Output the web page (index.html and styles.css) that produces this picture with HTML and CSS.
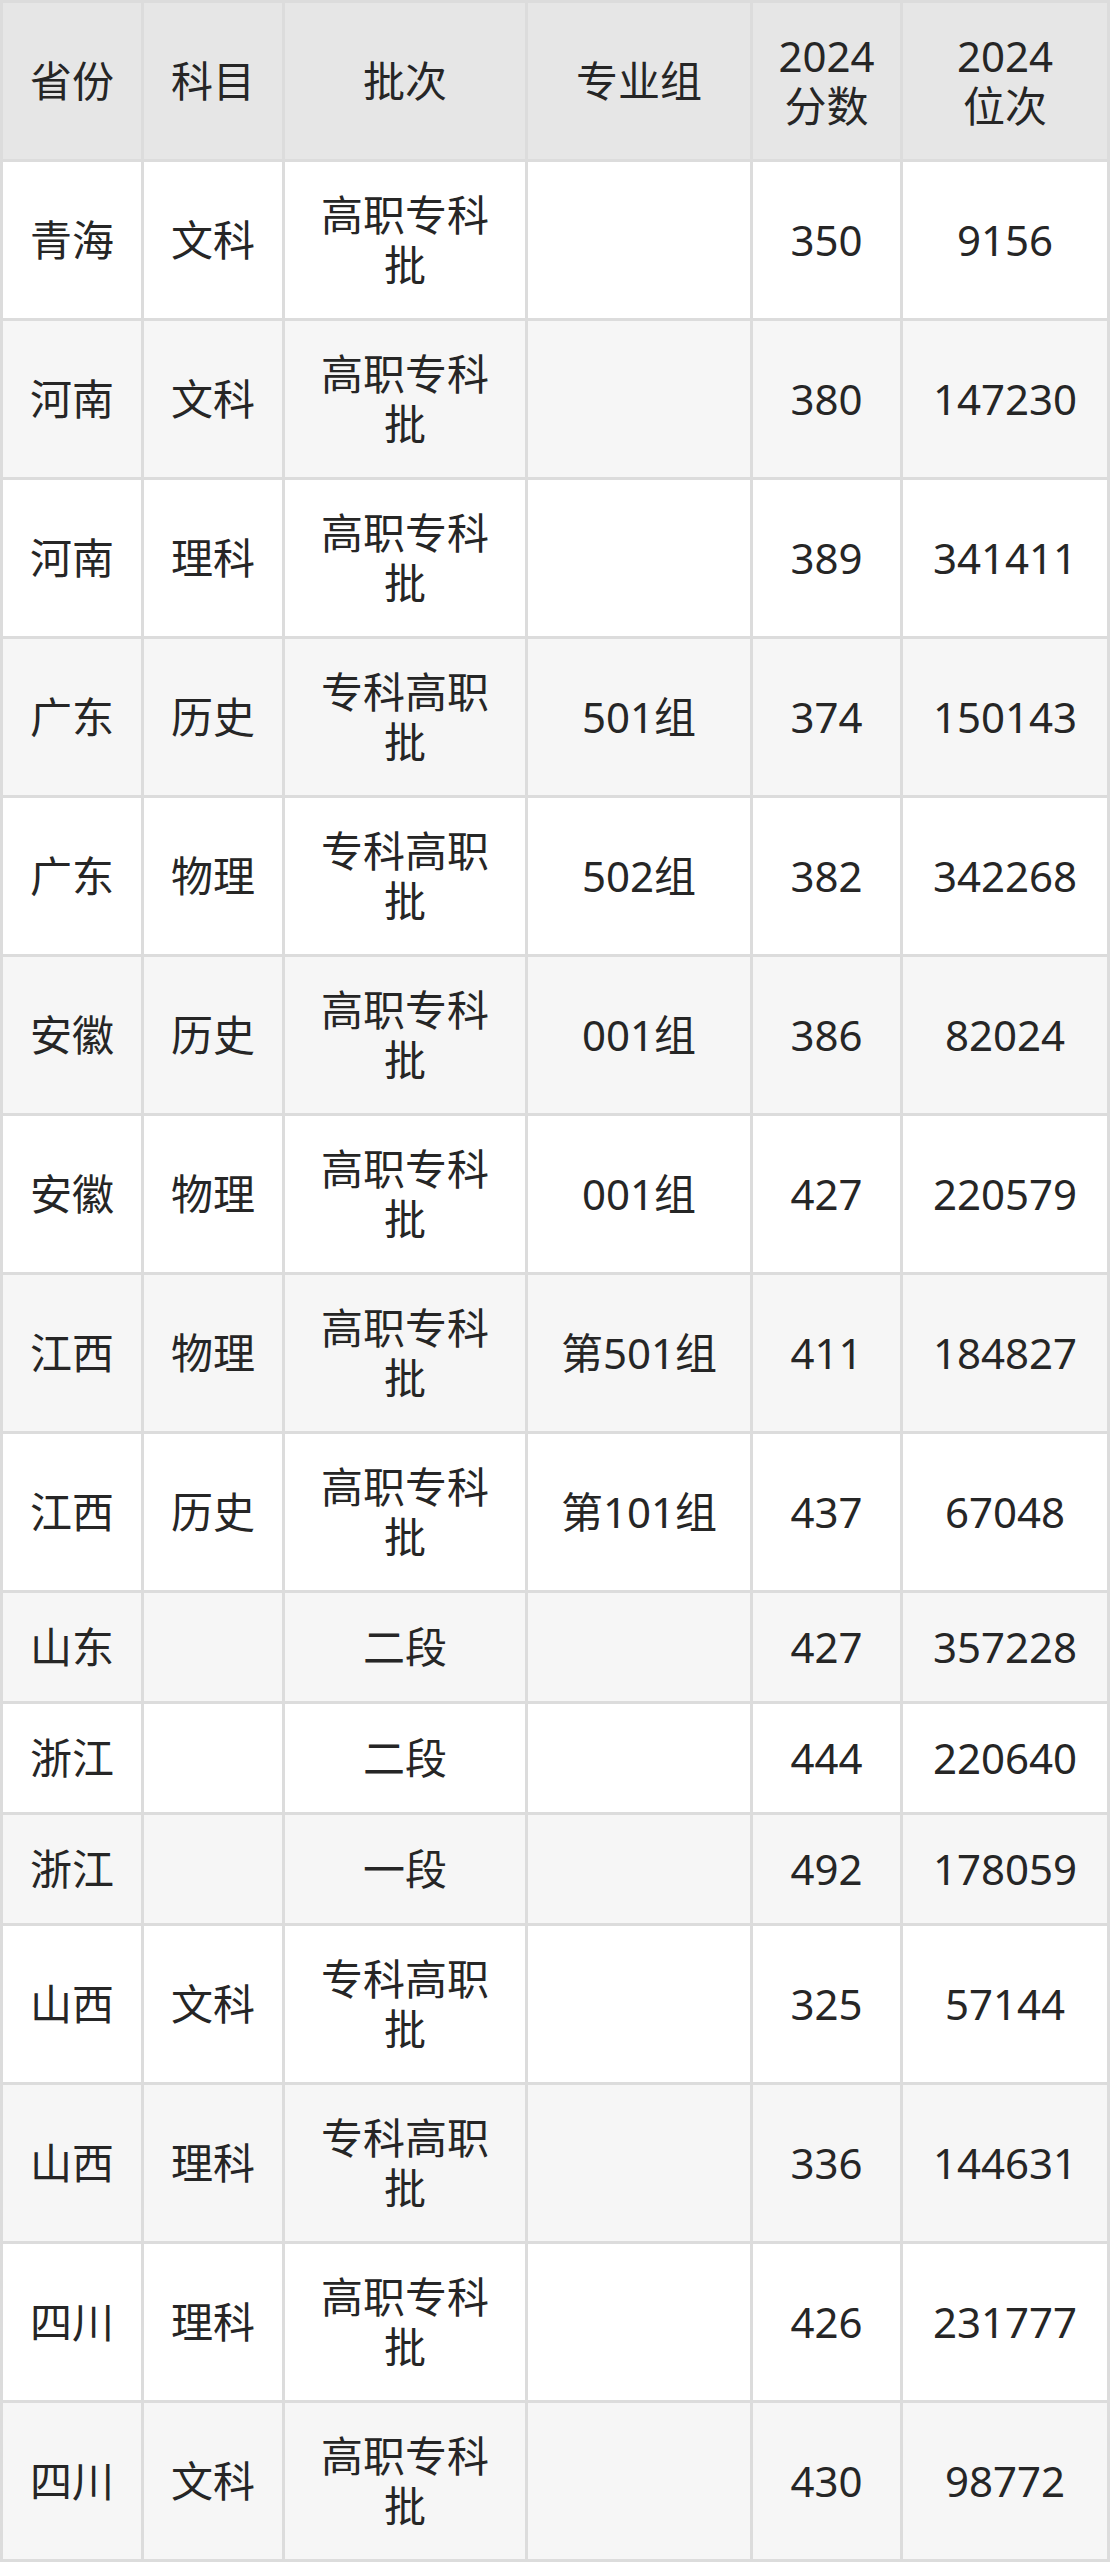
FILE: index.html
```html
<!DOCTYPE html>
<html lang="zh-CN">
<head>
<meta charset="utf-8">
<title>2024 分数位次</title>
<link rel="stylesheet" href="styles.css">
</head>
<body>
<div class="table">
  <div class="row head tall"><div class="cell">省份</div><div class="cell">科目</div><div class="cell">批次</div><div class="cell">专业组</div><div class="cell">2024<br>分数</div><div class="cell">2024<br>位次</div></div>
  <div class="row tall"><div class="cell">青海</div><div class="cell">文科</div><div class="cell">高职专科<br>批</div><div class="cell"></div><div class="cell">350</div><div class="cell">9156</div></div>
  <div class="row tall alt"><div class="cell">河南</div><div class="cell">文科</div><div class="cell">高职专科<br>批</div><div class="cell"></div><div class="cell">380</div><div class="cell">147230</div></div>
  <div class="row tall"><div class="cell">河南</div><div class="cell">理科</div><div class="cell">高职专科<br>批</div><div class="cell"></div><div class="cell">389</div><div class="cell">341411</div></div>
  <div class="row tall alt"><div class="cell">广东</div><div class="cell">历史</div><div class="cell">专科高职<br>批</div><div class="cell">501组</div><div class="cell">374</div><div class="cell">150143</div></div>
  <div class="row tall"><div class="cell">广东</div><div class="cell">物理</div><div class="cell">专科高职<br>批</div><div class="cell">502组</div><div class="cell">382</div><div class="cell">342268</div></div>
  <div class="row tall alt"><div class="cell">安徽</div><div class="cell">历史</div><div class="cell">高职专科<br>批</div><div class="cell">001组</div><div class="cell">386</div><div class="cell">82024</div></div>
  <div class="row tall"><div class="cell">安徽</div><div class="cell">物理</div><div class="cell">高职专科<br>批</div><div class="cell">001组</div><div class="cell">427</div><div class="cell">220579</div></div>
  <div class="row tall alt"><div class="cell">江西</div><div class="cell">物理</div><div class="cell">高职专科<br>批</div><div class="cell">第501组</div><div class="cell">411</div><div class="cell">184827</div></div>
  <div class="row tall"><div class="cell">江西</div><div class="cell">历史</div><div class="cell">高职专科<br>批</div><div class="cell">第101组</div><div class="cell">437</div><div class="cell">67048</div></div>
  <div class="row short alt"><div class="cell">山东</div><div class="cell"></div><div class="cell">二段</div><div class="cell"></div><div class="cell">427</div><div class="cell">357228</div></div>
  <div class="row short"><div class="cell">浙江</div><div class="cell"></div><div class="cell">二段</div><div class="cell"></div><div class="cell">444</div><div class="cell">220640</div></div>
  <div class="row short alt"><div class="cell">浙江</div><div class="cell"></div><div class="cell">一段</div><div class="cell"></div><div class="cell">492</div><div class="cell">178059</div></div>
  <div class="row tall"><div class="cell">山西</div><div class="cell">文科</div><div class="cell">专科高职<br>批</div><div class="cell"></div><div class="cell">325</div><div class="cell">57144</div></div>
  <div class="row tall alt"><div class="cell">山西</div><div class="cell">理科</div><div class="cell">专科高职<br>批</div><div class="cell"></div><div class="cell">336</div><div class="cell">144631</div></div>
  <div class="row tall"><div class="cell">四川</div><div class="cell">理科</div><div class="cell">高职专科<br>批</div><div class="cell"></div><div class="cell">426</div><div class="cell">231777</div></div>
  <div class="row tall alt"><div class="cell">四川</div><div class="cell">文科</div><div class="cell">高职专科<br>批</div><div class="cell"></div><div class="cell">430</div><div class="cell">98772</div></div>
</div>
</body>
</html>
```

FILE: styles.css
```css
html, body {
  margin: 0;
  padding: 0;
  background: #ffffff;
}

.table {
  width: 1110px;
  box-sizing: border-box;
  padding: 3px;
  display: flex;
  flex-direction: column;
  gap: 3px;
  background: #dcdcdc;
  font-family: "Noto Sans", "Noto Sans CJK SC", sans-serif;
  font-size: 42px;
  line-height: 50px;
  color: #262626;
}

.row {
  display: grid;
  grid-template-columns: 138px 138px 240px 222px 147px 204px;
  gap: 3px;
}

.row.tall { height: 156px; }
.row.short { height: 108px; }

.cell {
  display: flex;
  align-items: center;
  justify-content: center;
  text-align: center;
  background: #ffffff;
}

.row.alt .cell { background: #f6f6f6; }
.row.head .cell { background: #e6e6e6; }
```
